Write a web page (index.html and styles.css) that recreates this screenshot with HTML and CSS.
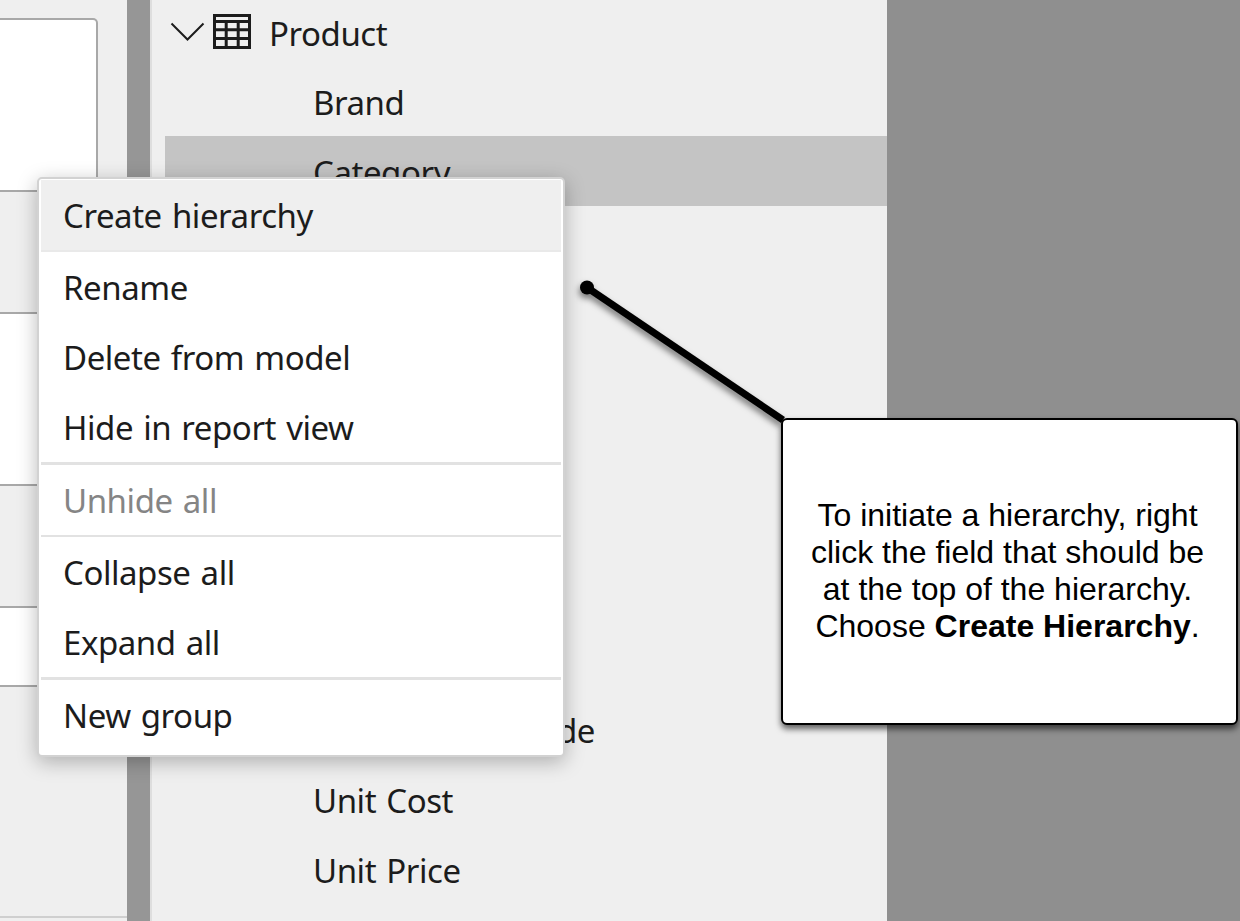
FILE: index.html
```html
<!DOCTYPE html>
<html lang="en">
<head>
<meta charset="utf-8">
<title>Create hierarchy</title>
<link rel="stylesheet" href="styles.css">
</head>
<body>
<div class="screen">
  <aside class="cards">
    <div class="card card-top"></div>
    <div class="gap"></div>
    <div class="card card-mid"></div>
    <div class="gap"></div>
    <div class="card card-low"></div>
    <div class="rest"></div>
  </aside>
  <div class="splitter"></div>
  <main class="tree">
    <div class="row table-row">
      <svg class="chevron" width="36" height="20" viewBox="0 0 36 20"><path d="M1.5 1.5 17.5 17.5 33.5 1.5" fill="none" stroke="#1c1c1c" stroke-width="2"/></svg>
      <svg class="table-icon" width="38" height="35" viewBox="0 0 38 35"><path d="M1.5 1.5H36.5V33.5H1.5ZM1.5 7.5H36.5M1.5 15.8H36.5M1.5 24.6H36.5M13.2 7.5V33.5M25.2 7.5V33.5" fill="none" stroke="#1c1c1c" stroke-width="3"/></svg>
      <span class="table-name">Product</span>
    </div>
    <div class="row field">Brand</div>
    <div class="row field selected">Category</div>
    <div class="covered"></div>
    <div class="row tail">de</div>
    <div class="row field">Unit Cost</div>
    <div class="row field">Unit Price</div>
  </main>
  <nav class="menu">
    <div class="item active">Create hierarchy</div>
    <div class="item">Rename</div>
    <div class="item">Delete from model</div>
    <div class="item">Hide in report view</div>
    <div class="sep"></div>
    <div class="item disabled">Unhide all</div>
    <div class="sep thin"></div>
    <div class="item">Collapse all</div>
    <div class="item">Expand all</div>
    <div class="sep"></div>
    <div class="item">New group</div>
  </nav>
  <svg class="pointer" width="240" height="160" viewBox="0 0 240 160"><path d="M17 17.5 213 150" stroke="#000" stroke-width="7"/><circle cx="17" cy="17.5" r="7" fill="#000"/></svg>
  <section class="callout">
    <p>To initiate a hierarchy, right<br>click the field that should be<br>at the top of the hierarchy.<br>Choose <b>Create Hierarchy</b>.</p>
  </section>
</div>
</body>
</html>
```
FILE: styles.css
```css
* { box-sizing: border-box; }
body { margin: 0; }
.screen {
  position: relative;
  display: flex;
  width: 1240px;
  height: 921px;
  overflow: hidden;
  background: #8f8f8f;
  font: 33px/70px "Noto Sans", sans-serif;
  letter-spacing: -0.45px;
  word-spacing: 2px;
  color: #1c1c1c;
  white-space: nowrap;
}
.cards {
  display: flex;
  flex-direction: column;
  width: 127px;
  padding-top: 18px;
  background: #efefef;
}
.card {
  width: 98px;
  background: #fff;
  border: 2px solid #a8a8a8;
  border-left: 0;
}
.card-top { height: 174px; border-radius: 0 5px 5px 0; }
.gap { height: 120px; }
.card-mid { height: 174px; }
.card-low { height: 81px; }
.rest { height: 231px; border-bottom: 2px solid #cfcfcf; }
.splitter {
  width: 25px;
  background: #969696;
  border-right: 2px solid #dedede;
}
.tree {
  display: flex;
  flex-direction: column;
  width: 734.5px;
  padding-left: 13px;
  background: #efefef;
}
.row { height: 69.8px; flex: none; line-height: 74px; }
.table-row {
  display: flex;
  align-items: center;
  margin-top: -3.4px;
  padding-left: 5px;
}
.table-icon { margin: 0 18px 0 7px; }
.table-name { height: 69.8px; }
.field { padding-left: 148px; }
.selected { background: #c4c4c4; }
.covered { flex: none; height: 488px; }
.tail { width: 430px; text-align: right; }
.menu {
  position: absolute;
  left: 37px;
  top: 177px;
  width: 528px;
  height: 580px;
  padding: 1px 2px;
  background: #fff;
  border: 2px solid #d2d2d2;
  border-radius: 5px;
  box-shadow: 0 5px 20px rgba(0, 0, 0, .27);
}
.item { height: 70px; padding-left: 22px; line-height: 72px; }
.active { height: 72px; background: #efefef; border-bottom: 2px solid #e9e9e9; }
.disabled { color: #858585; }
.sep { height: 3px; background: #e2e2e2; }
.thin { height: 2px; }
.pointer {
  position: absolute;
  left: 570px;
  top: 270px;
  filter: drop-shadow(-1px 4px 3px rgba(0, 0, 0, .5));
}
.callout {
  position: absolute;
  left: 781px;
  top: 417.5px;
  width: 457px;
  height: 307px;
  display: flex;
  align-items: center;
  justify-content: center;
  background: #fff;
  border: 2.5px solid #000;
  border-radius: 6px;
  box-shadow: 0 4px 6px rgba(0, 0, 0, .6);
  font: 32px/37.2px "Liberation Sans", Arial, sans-serif;
  letter-spacing: 0;
  word-spacing: 0;
  color: #000;
  text-align: center;
}
.callout p { margin: 0 4px 0 0; }
```
